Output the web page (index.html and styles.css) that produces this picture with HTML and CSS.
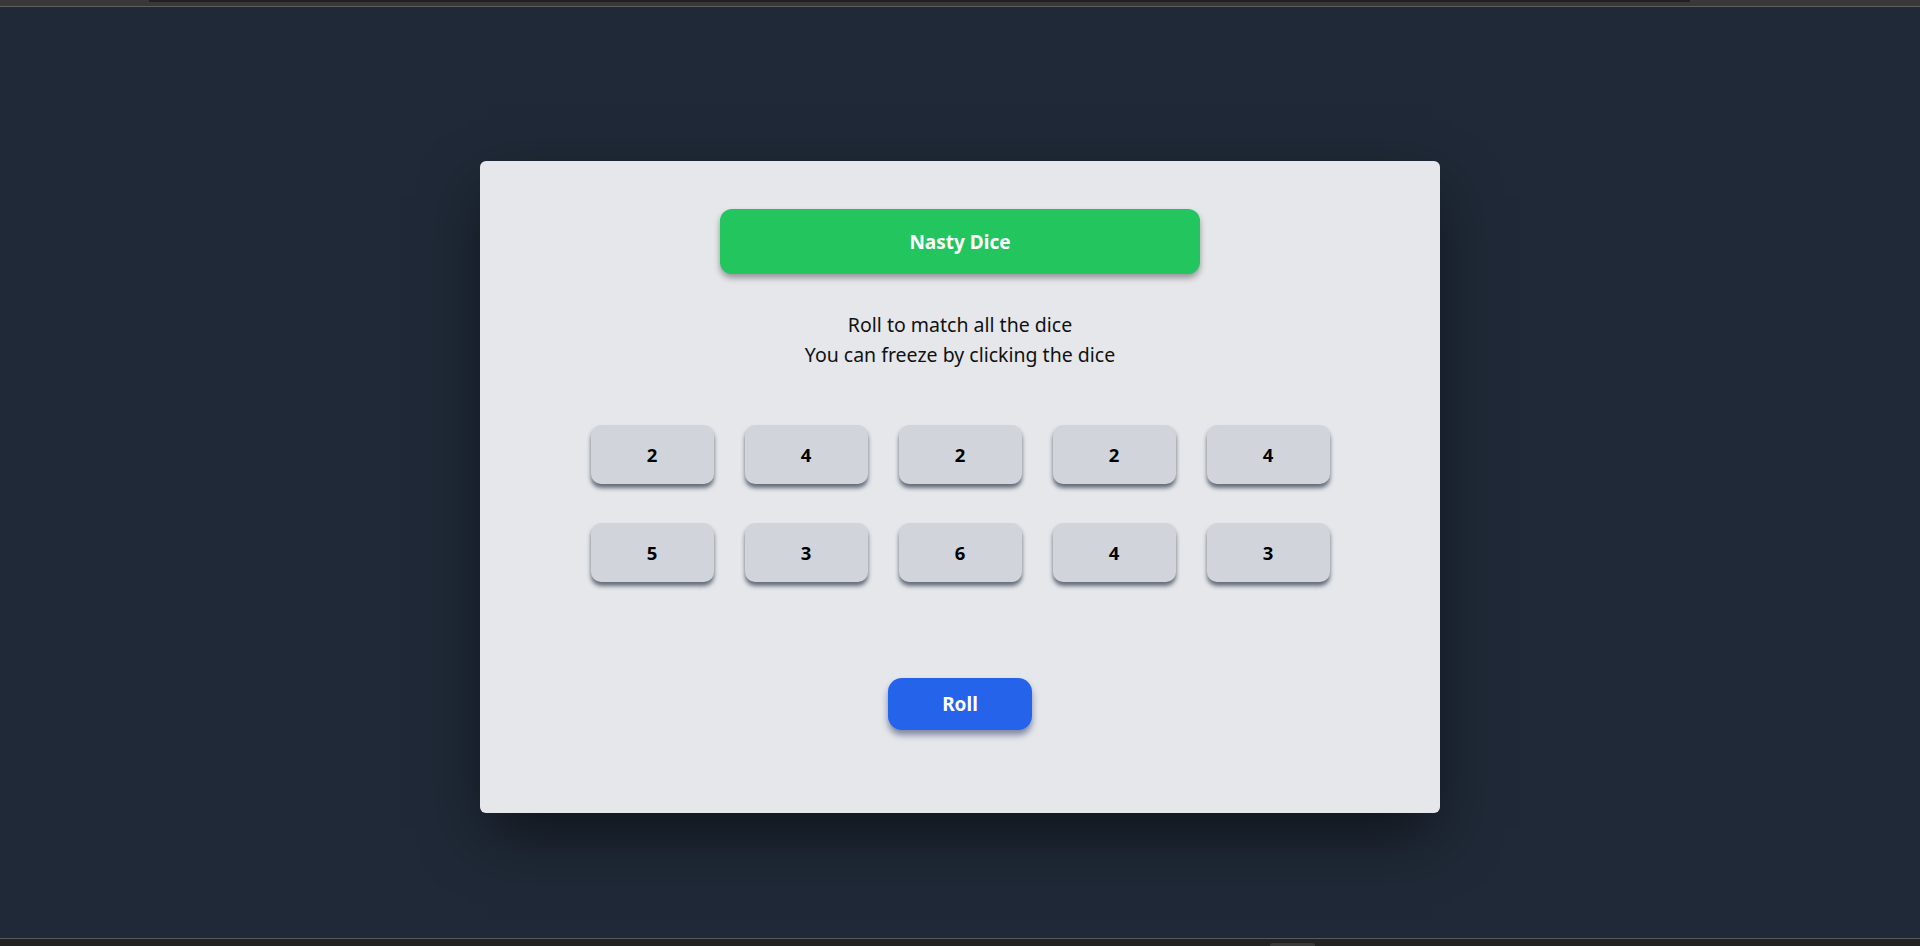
FILE: index.html
```html
<!DOCTYPE html>
<html lang="en">
<head>
<meta charset="utf-8">
<title>Nasty Dice</title>
<link rel="stylesheet" href="styles.css">
</head>
<body>
<div class="chrome-top"><div class="chrome-tab"></div></div>
<main class="stage">
  <section class="card">
    <h1 class="title">Nasty Dice</h1>
    <p class="intro">Roll to match all the dice<br>You can freeze by clicking the dice</p>
    <div class="dice">
      <button class="die">2</button>
      <button class="die">4</button>
      <button class="die">2</button>
      <button class="die">2</button>
      <button class="die">4</button>
      <button class="die">5</button>
      <button class="die">3</button>
      <button class="die">6</button>
      <button class="die">4</button>
      <button class="die">3</button>
    </div>
    <button class="roll">Roll</button>
  </section>
</main>
<div class="chrome-bottom"><div class="chrome-pill"></div></div>
</body>
</html>
```

FILE: styles.css
```css
* { box-sizing: border-box; }
html, body { margin: 0; padding: 0; height: 946px; overflow: hidden; }
body {
  background: #1f2937;
  font-family: "Noto Sans", "Open Sans", sans-serif;
  display: flex;
  flex-direction: column;
}
.chrome-top {
  height: 7px;
  background: #383838;
  border-bottom: 1px solid #5e5e5e;
  display: flex;
  justify-content: flex-start;
}
.chrome-tab {
  width: 1541px;
  height: 2px;
  background: #202020;
  margin-left: 149px;
}
.stage {
  flex: 1;
  display: flex;
  justify-content: center;
  align-items: flex-start;
  padding-top: 154px;
}
.card {
  width: 960px;
  height: 652px;
  background: #e5e7eb;
  border-radius: 6px;
  padding-top: 48px;
  display: flex;
  flex-direction: column;
  align-items: center;
  box-shadow: 0 25px 60px -8px rgba(0, 0, 0, 0.55);
}
.title {
  margin: 0;
  width: 480px;
  height: 65px;
  background: #22c55e;
  color: #ffffff;
  border-radius: 12px;
  font-size: 19px;
  font-weight: 700;
  display: flex;
  align-items: center;
  justify-content: center;
  box-shadow: 0 4px 6px rgba(0, 0, 0, 0.35);
}
.intro {
  margin: 36px 0 0;
  font-size: 19.5px;
  line-height: 30px;
  text-align: center;
  color: #111111;
}
.dice {
  margin-top: 55px;
  display: grid;
  grid-template-columns: repeat(5, 123px);
  column-gap: 31px;
  row-gap: 39px;
}
.die {
  height: 59px;
  border: none;
  border-radius: 10px;
  background: #d1d5db;
  font-family: inherit;
  font-size: 18.5px;
  font-weight: 700;
  color: #000000;
  box-shadow: 0 4px 4px rgba(30, 41, 59, 0.65);
  padding: 0;
}
.roll {
  margin-top: 96px;
  width: 144px;
  height: 52px;
  border: none;
  border-radius: 14px;
  background: #2563eb;
  color: #ffffff;
  font-family: inherit;
  font-size: 19px;
  font-weight: 700;
  box-shadow: 0 5px 6px rgba(30, 41, 90, 0.5);
  padding: 0;
}
.chrome-bottom {
  height: 8px;
  background: #222222;
  border-top: 1px solid #5a5a5a;
  position: relative;
}
.chrome-pill {
  position: absolute;
  left: 1270px;
  top: 4px;
  width: 45px;
  height: 4px;
  background: #3a3a3a;
  border-radius: 3px 3px 0 0;
}
```
